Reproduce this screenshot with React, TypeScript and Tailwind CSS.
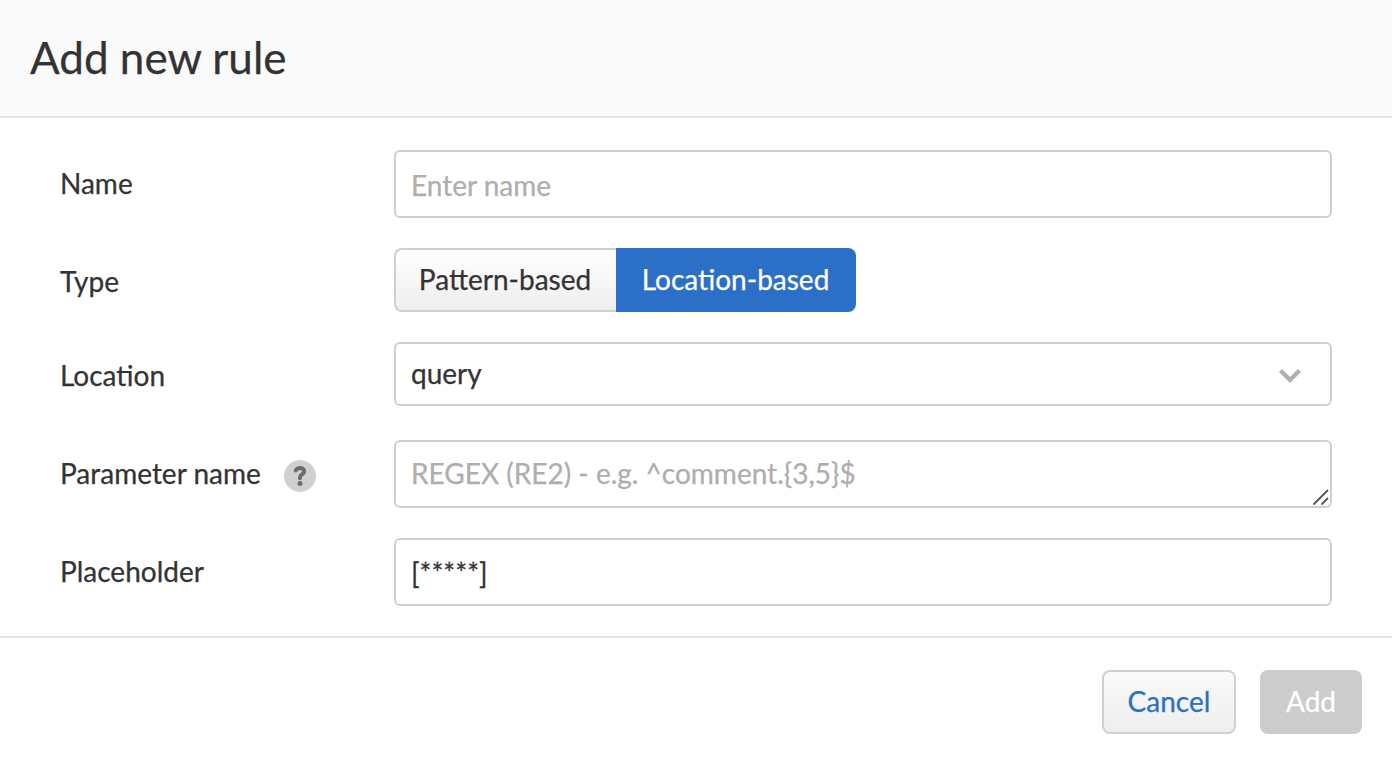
import React from "react";

const field =
  "flex w-[938px] rounded-[6px] border-2 border-[#d0d0d0] bg-white px-[15px]";

function Row({ label, help, className, labelClass, children }: { label: string; help?: boolean; className: string; labelClass: string; children: React.ReactNode }) {
  return (
    <div className={"flex items-center " + className}>
      <div className="flex w-[334px] shrink-0 items-center gap-[23px]">
        <span className={labelClass}>{label}</span>
        {help && (
          <svg className="mt-[3px]" width="32" height="32" viewBox="0 0 32 32" fill="none">
            <circle cx="16" cy="16" r="16" fill="#d0d0d0" />
            <path d="M11.7 10.4C12.8 8.8 14.2 8 16 8C18.5 8 20.2 9.4 20.2 11.5C20.2 14.2 16 14.3 16 17.6V18.3" stroke="#6c6c6c" strokeWidth="4" strokeLinecap="round" strokeLinejoin="round" />
            <circle cx="16" cy="23.6" r="2.5" fill="#6c6c6c" />
          </svg>
        )}
      </div>
      {children}
    </div>
  );
}

export default function App() {
  return (
    <div className="flex h-[764px] w-[1392px] flex-col overflow-hidden bg-white font-['Lato',sans-serif] text-[28px] leading-[34px] text-[#333333] [-webkit-text-stroke:0.25px_currentColor]">
      <header className="flex h-[118px] items-center border-b-2 border-[#e4e4e4] bg-[#fafafa] pb-[2px] pl-[30px]">
        <h1 className="text-[44px] leading-[54px]">Add new rule</h1>
      </header>
      <main className="flex h-[520px] flex-col border-b-2 border-[#e4e4e4] pt-8 pl-[60px]">
        <Row label="Name" labelClass="pb-[2px]" className="h-[68px]">
          <div className={field + " h-[68px] items-center pt-[2px] text-[#aeaeae]"}>Enter name</div>
        </Row>
        <Row label="Type" labelClass="pt-[2px]" className="mt-[30px] h-[64px]">
          <div className="flex h-[64px]">
            <button className="w-[222px] rounded-l-[8px] border-2 border-r-0 border-[#d0d0d0] bg-linear-to-b from-white to-[#eeeeee] pr-[2px] pb-[2px]">Pattern-based</button>
            <button className="w-[240px] rounded-r-[8px] bg-[#2c6fc7] pr-px pb-[2px] text-white">Location-based</button>
          </div>
        </Row>
        <Row label="Location" labelClass="pt-[2px]" className="mt-[30px] h-[64px]">
          <div className={field + " h-[64px] items-center justify-between pr-7"}>
            <span className="pb-[2px]">query</span>
            <svg className="mt-[4px]" width="24" height="16" viewBox="0 0 24 16" fill="none" stroke="#b0b0b0" strokeWidth="4.4"><path d="M2.5 2.5 12 12 21.5 2.5" /></svg>
          </div>
        </Row>
        <Row label="Parameter name" labelClass="pb-[2px]" help className="mt-[34px] h-[68px]">
          <div className={field + " relative h-[68px] items-center pb-[2px] text-[#aeaeae]"}>
            REGEX (RE2) - e.g. ^comment.{"{3,5}"}$
            <svg className="absolute right-0 bottom-0" width="18" height="18" viewBox="0 0 18 18" fill="none" stroke="#555555" strokeWidth="1.8"><path d="M1.5 16.5 16 2M9.5 16.5 16 10" /></svg>
          </div>
        </Row>
        <Row label="Placeholder" labelClass="pb-[2px]" className="mt-[30px] h-[68px]">
          <div className={field + " h-[68px] items-center pt-[2px]"}>[*****]</div>
        </Row>
      </main>
      <footer className="flex justify-end gap-6 pt-8 pr-[30px]">
        <button className="h-[64px] w-[134px] rounded-[8px] border-2 border-[#d0d0d0] bg-linear-to-b from-[#fafafa] to-[#eeeeee] pb-[2px] text-[#2c6fc7]">Cancel</button>
        <button className="h-[64px] w-[102px] rounded-[8px] bg-[#cccccc] pb-[2px] text-white">Add</button>
      </footer>
    </div>
  );
}
